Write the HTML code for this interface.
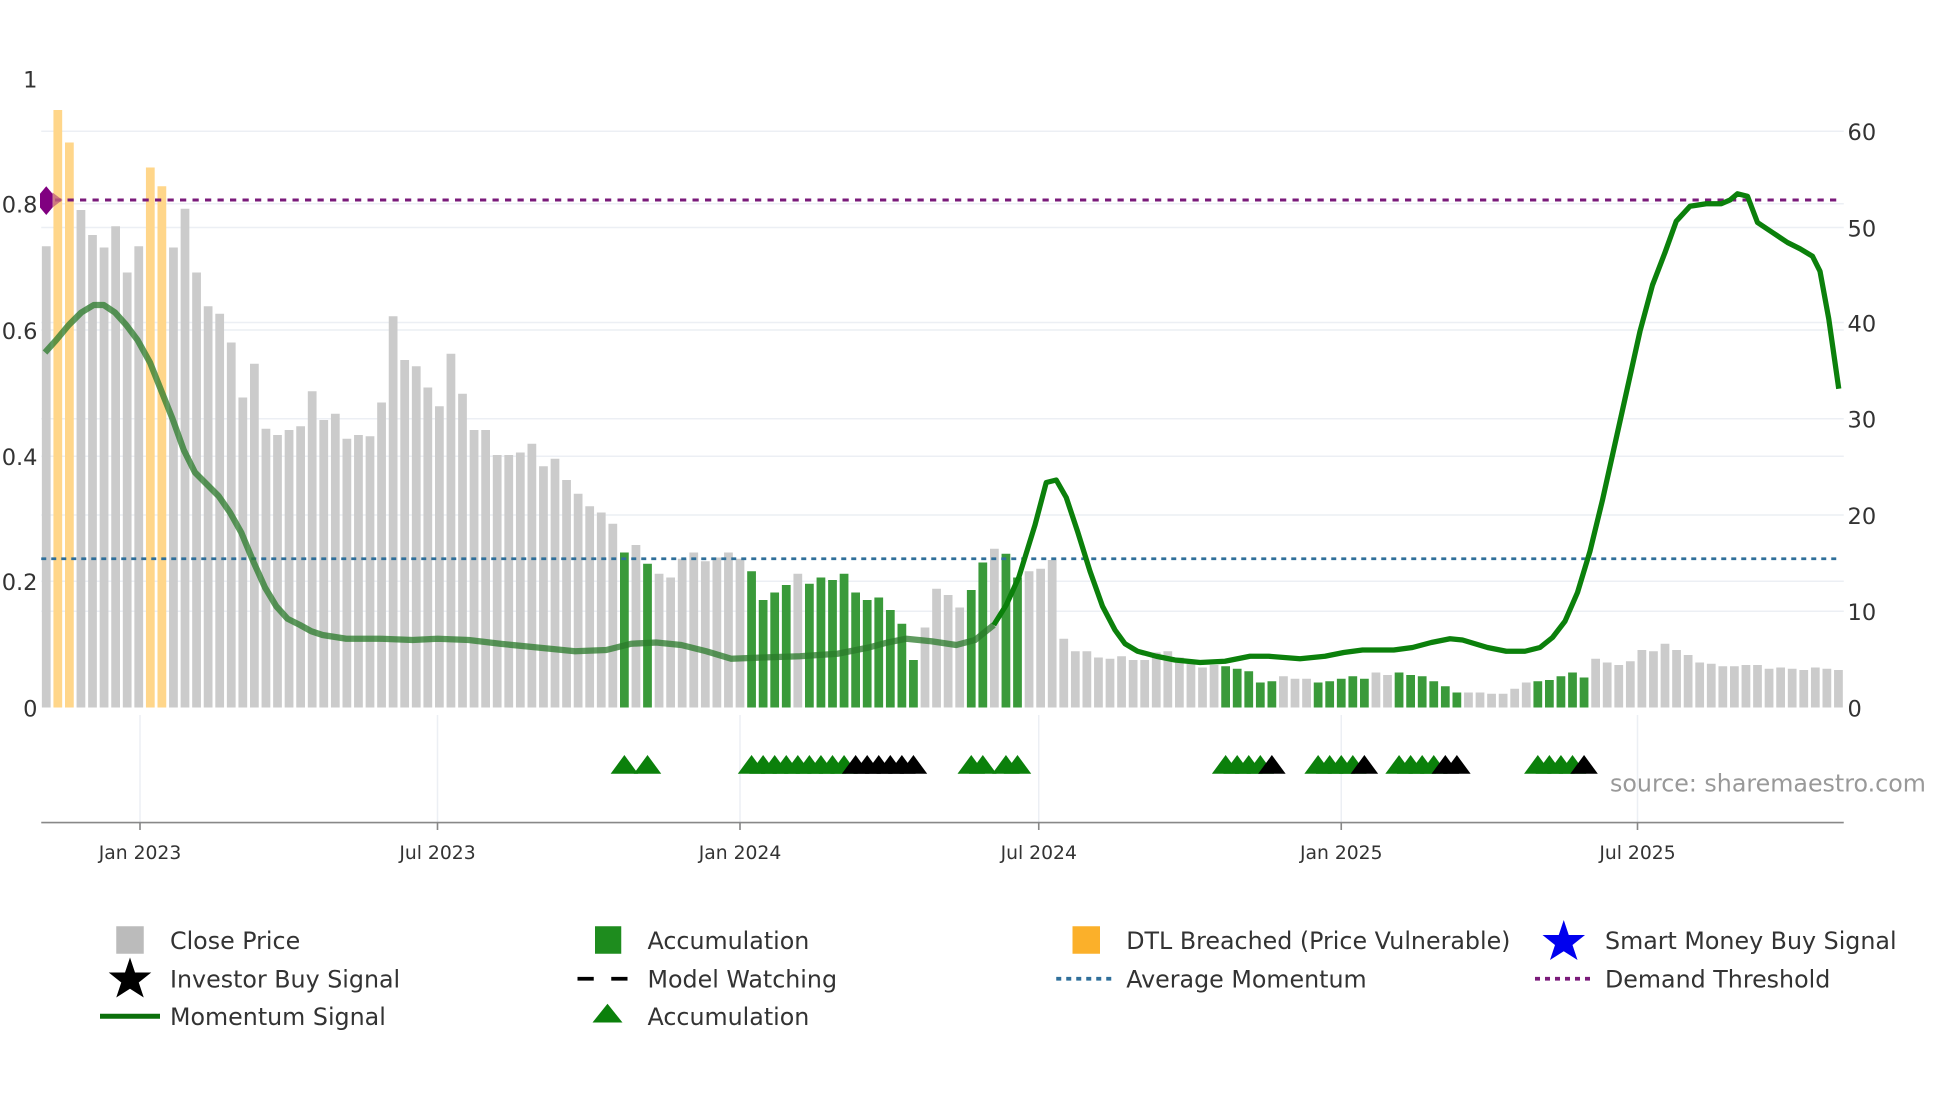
<!DOCTYPE html>
<html><head><meta charset="utf-8"><style>
html,body{margin:0;padding:0;background:#fff;}
svg{display:block;font-family:"DejaVu Sans","Liberation Sans",sans-serif;}
</style></head><body>
<svg id="s" width="1960" height="1102" viewBox="0 0 1568 881.6" xmlns="http://www.w3.org/2000/svg">
<g stroke="#eceff4" stroke-width="1.2">
<line x1="33" x2="1475" y1="105" y2="105"/><line x1="33" x2="1475" y1="182" y2="182"/>
<line x1="33" x2="1475" y1="258" y2="258"/><line x1="33" x2="1475" y1="335" y2="335"/>
<line x1="33" x2="1475" y1="412" y2="412"/><line x1="33" x2="1475" y1="489" y2="489"/>
<line x1="33" x2="1475" y1="163" y2="163"/><line x1="33" x2="1475" y1="264" y2="264"/>
<line x1="33" x2="1475" y1="365" y2="365"/><line x1="33" x2="1475" y1="465" y2="465"/>
<line x1="112" x2="112" y1="572" y2="658"/><line x1="350" x2="350" y1="572" y2="658"/>
<line x1="592" x2="592" y1="572" y2="658"/><line x1="831" x2="831" y1="572" y2="658"/>
<line x1="1073" x2="1073" y1="572" y2="658"/><line x1="1310" x2="1310" y1="572" y2="658"/>
</g>
<g id="bars"></g>
<line x1="33" x2="1472" y1="447" y2="447" stroke="#2f6f9a" stroke-width="2.2" stroke-dasharray="4,4"/>
<line x1="44" x2="1472" y1="160" y2="160" stroke="#7a1a7a" stroke-width="2.4" stroke-dasharray="5,5"/>
<polygon points="37,149 42,155 42,166 37,172 32,166 32,155" fill="#800080"/>
<polygon points="42,154 50,160 42,166" fill="#c0607a" opacity="0.8"/>
<polyline id="m1" fill="none" stroke="#2a7a2a" stroke-opacity="0.75" stroke-width="5" stroke-linejoin="round"
points="36,282 45,272 55,260 65,250 75,244 83,244 92,250 101,260 110,272 120,290 128,310 138,335 147,360 156,378 166,388 175,397 184,410 193,426 203,450 212,470 221,485 230,495 240,500 249,505 258,508 277,511 304,511 330,512 350,511 375,512 400,515 430,518 460,521 485,520 505,515 525,514 545,516 565,521 585,527 610,526 640,525 670,523 695,518 710,514 725,511 745,513 765,516 780,512 795,500"/>
<polyline fill="none" stroke="#0b800b" stroke-width="4.2" stroke-linejoin="round"
points="795,500 805,484 815,462 828,420 837,386 845,384 853,398 862,425 872,457 882,485 892,504 900,515 910,521 925,525 940,528 960,530 980,529 1000,525 1015,525 1040,527 1060,525 1075,522 1090,520 1115,520 1130,518 1145,514 1160,511 1170,512 1190,518 1205,521 1220,521 1232,518 1242,510 1252,497 1262,474 1272,441 1282,400 1292,355 1302,310 1312,265 1322,228 1332,202 1341,177 1352,165 1365,163 1377,163 1384,160 1390,155 1398,157 1406,178 1418,186 1430,194 1440,199 1450,205 1456,217 1463,255 1471,311"/>
<g id="tris"></g>
<line x1="33" x2="1475" y1="658" y2="658" stroke="#888" stroke-width="1.3"/>
<g stroke="#888" stroke-width="1.3">
<line x1="112" x2="112" y1="658" y2="664"/><line x1="350" x2="350" y1="658" y2="664"/>
<line x1="592" x2="592" y1="658" y2="664"/><line x1="831" x2="831" y1="658" y2="664"/>
<line x1="1073" x2="1073" y1="658" y2="664"/><line x1="1310" x2="1310" y1="658" y2="664"/>
</g>
<g font-size="18" fill="#333" text-anchor="end">
<text x="30" y="70">1</text><text x="30" y="170">0.8</text><text x="30" y="271">0.6</text>
<text x="30" y="372">0.4</text><text x="30" y="472">0.2</text><text x="30" y="573">0</text>
</g>
<g font-size="18" fill="#333">
<text x="1478" y="112">60</text><text x="1478" y="189">50</text><text x="1478" y="265">40</text>
<text x="1478" y="342">30</text><text x="1478" y="419">20</text><text x="1478" y="496">10</text>
<text x="1478" y="573">0</text>
</g>
<g font-size="15" fill="#333" text-anchor="middle">
<text x="112" y="687">Jan 2023</text><text x="350" y="687">Jul 2023</text><text x="592" y="687">Jan 2024</text>
<text x="831" y="687">Jul 2024</text><text x="1073" y="687">Jan 2025</text><text x="1310" y="687">Jul 2025</text>
</g>
<text x="1288" y="633" font-size="19" fill="#999">source: sharemaestro.com</text>
<g font-size="19" fill="#333">
<rect x="93" y="741" width="22" height="22" fill="#bbb"/>
<text x="136" y="759">Close Price</text>
<polygon points="104,766 108,778 121,778 111,786 115,798 104,791 93,798 97,786 87,778 100,778" fill="#000"/>
<text x="136" y="790">Investor Buy Signal</text>
<line x1="80" x2="128" y1="813" y2="813" stroke="#0b700b" stroke-width="4"/>
<text x="136" y="820">Momentum Signal</text>
<rect x="476" y="741" width="21" height="22" fill="#1e8c1e"/>
<text x="518" y="759">Accumulation</text>
<line x1="462" x2="506" y1="783" y2="783" stroke="#000" stroke-width="3" stroke-dasharray="13,14"/>
<text x="518" y="790">Model Watching</text>
<polygon points="486,803 498,818 474,818" fill="#0b800b"/>
<text x="518" y="820">Accumulation</text>
<rect x="858" y="741" width="22" height="22" fill="#fbb02a"/>
<text x="901" y="759">DTL Breached (Price Vulnerable)</text>
<line x1="845" x2="889" y1="783" y2="783" stroke="#2f6f9a" stroke-width="3" stroke-dasharray="4,4"/>
<text x="901" y="790">Average Momentum</text>
<polygon points="1251,736 1255,748 1268,748 1258,756 1262,768 1251,761 1240,768 1244,756 1234,748 1247,748" fill="#0000ee"/>
<text x="1284" y="759">Smart Money Buy Signal</text>
<line x1="1228" x2="1272" y1="783" y2="783" stroke="#7a1a7a" stroke-width="3" stroke-dasharray="4,4"/>
<text x="1284" y="790">Demand Threshold</text>
</g>
</svg>
<script>
var tops=[197,88,114,168,188,198,181,218,197,134,149,198,167,218,245,251,274,318,291,343,348,344,341,313,336,331,351,348,349,322,253,288,293,310,325,283,315,344,344,364,364,362,355,373,367,384,395,405,410,419,
442,436,451,459,462,447,442,449,446,442,447,457,480,474,468,459,467,462,464,459,474,480,478,488,499,528,502,471,476,486,472,450,439,443,462,457,455,448,511,521,521,526,527,525,528,528,522,521,526,531,534,532,533,535,537,546,545,541,543,543,546,545,543,541,543,538,540,538,540,541,545,549,554,554,554,555,555,551,546,545,544,541,538,542,527,530,532,529,520,521,515,520,524,530,531,533,533,532,532,535,534,535,536,534,535,536];
var green=[50,52,61,62,63,64,66,67,68,69,70,71,72,73,74,75,80,81,83,84,102,103,104,105,106,110,111,112,113,114,117,118,119,120,121,122,129,130,131,132,133];
var orange=[1,2,9,10];
var b=document.getElementById("bars"),h="";
for(var i=0;i<tops.length;i++){var x=37+9.25*i-3.5,c="#cbcbcb";
if(green.indexOf(i)>=0)c="#3a9a3a";if(orange.indexOf(i)>=0)c="#ffd68a";
h+='<rect x="'+x+'" y="'+tops[i]+'" width="7" height="'+(566-tops[i])+'" fill="'+c+'"/>';}
b.innerHTML=h;
var tg=[50,52,61,62,63,64,65,66,67,68,69,80,81,83,84,102,103,104,105,110,111,112,113,117,118,119,120,129,130,131,132];
var tb=[70,71,72,73,74,75,106,114,121,122,133];var t="";
function tri(i,c){var x=37+9.25*i;return '<polygon points="'+(x-11)+',619 '+x+',604 '+(x+11)+',619" fill="'+c+'"/>';}
tg.forEach(function(i){t+=tri(i,"#0b800b");});tb.forEach(function(i){t+=tri(i,"#000");});
document.getElementById("tris").innerHTML=t;
</script>
</body></html>
